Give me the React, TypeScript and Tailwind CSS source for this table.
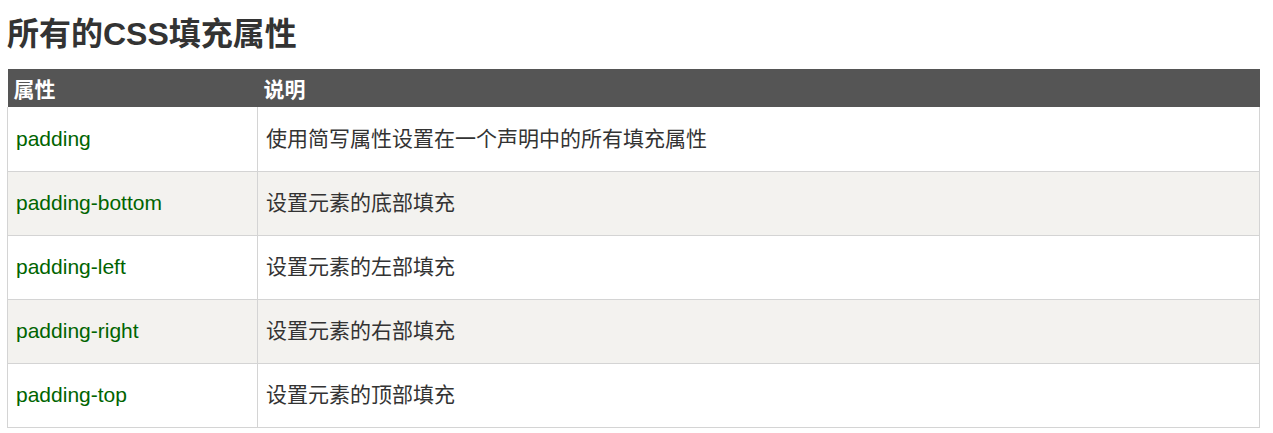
import React from "react";

const rows = [
  ["padding", "使用简写属性设置在一个声明中的所有填充属性"],
  ["padding-bottom", "设置元素的底部填充"],
  ["padding-left", "设置元素的左部填充"],
  ["padding-right", "设置元素的右部填充"],
  ["padding-top", "设置元素的顶部填充"],
];

export default function App() {
  return (
    <div
      className="bg-white w-[1273px] h-[433px] pl-[7px] pr-[13px] text-[#333]"
      style={{ fontFamily: '"Liberation Sans", Arial, "Noto Sans CJK SC", sans-serif' }}
    >
      <h2 className="text-[32px] font-bold leading-[40px] pt-[14px] pb-[15px] text-[#333]">
        所有的CSS填充属性
      </h2>
      <table className="w-[1253px] border-collapse table-fixed">
        <thead>
          <tr className="bg-[#555] text-white h-[38px]">
            <th className="w-[250px] text-left font-bold text-[21px] leading-[24px] pl-[6px] pt-[3px] align-middle">
              属性
            </th>
            <th className="text-left font-bold text-[21px] leading-[24px] pl-[6px] pt-[3px] align-middle">
              说明
            </th>
          </tr>
        </thead>
        <tbody>
          {rows.map(([p, d], i) => (
            <tr key={p} className={i % 2 === 1 ? "bg-[#f3f2ef] h-[64px]" : "bg-white h-[64px]"}>
              <td
                className={
                  i === 0
                    ? "border border-t-0 border-[#d4d4d4] pl-[8px] text-[21px] leading-[24px] text-[#006400] align-middle"
                    : "border border-[#d4d4d4] pl-[8px] text-[21px] leading-[24px] text-[#006400] align-middle"
                }
              >
                {p}
              </td>
              <td
                className={
                  i === 0
                    ? "border border-t-0 border-[#d4d4d4] pl-[8px] text-[21px] leading-[24px] text-[#333] align-middle"
                    : "border border-[#d4d4d4] pl-[8px] text-[21px] leading-[24px] text-[#333] align-middle"
                }
              >
                {d}
              </td>
            </tr>
          ))}
        </tbody>
      </table>
    </div>
  );
}
